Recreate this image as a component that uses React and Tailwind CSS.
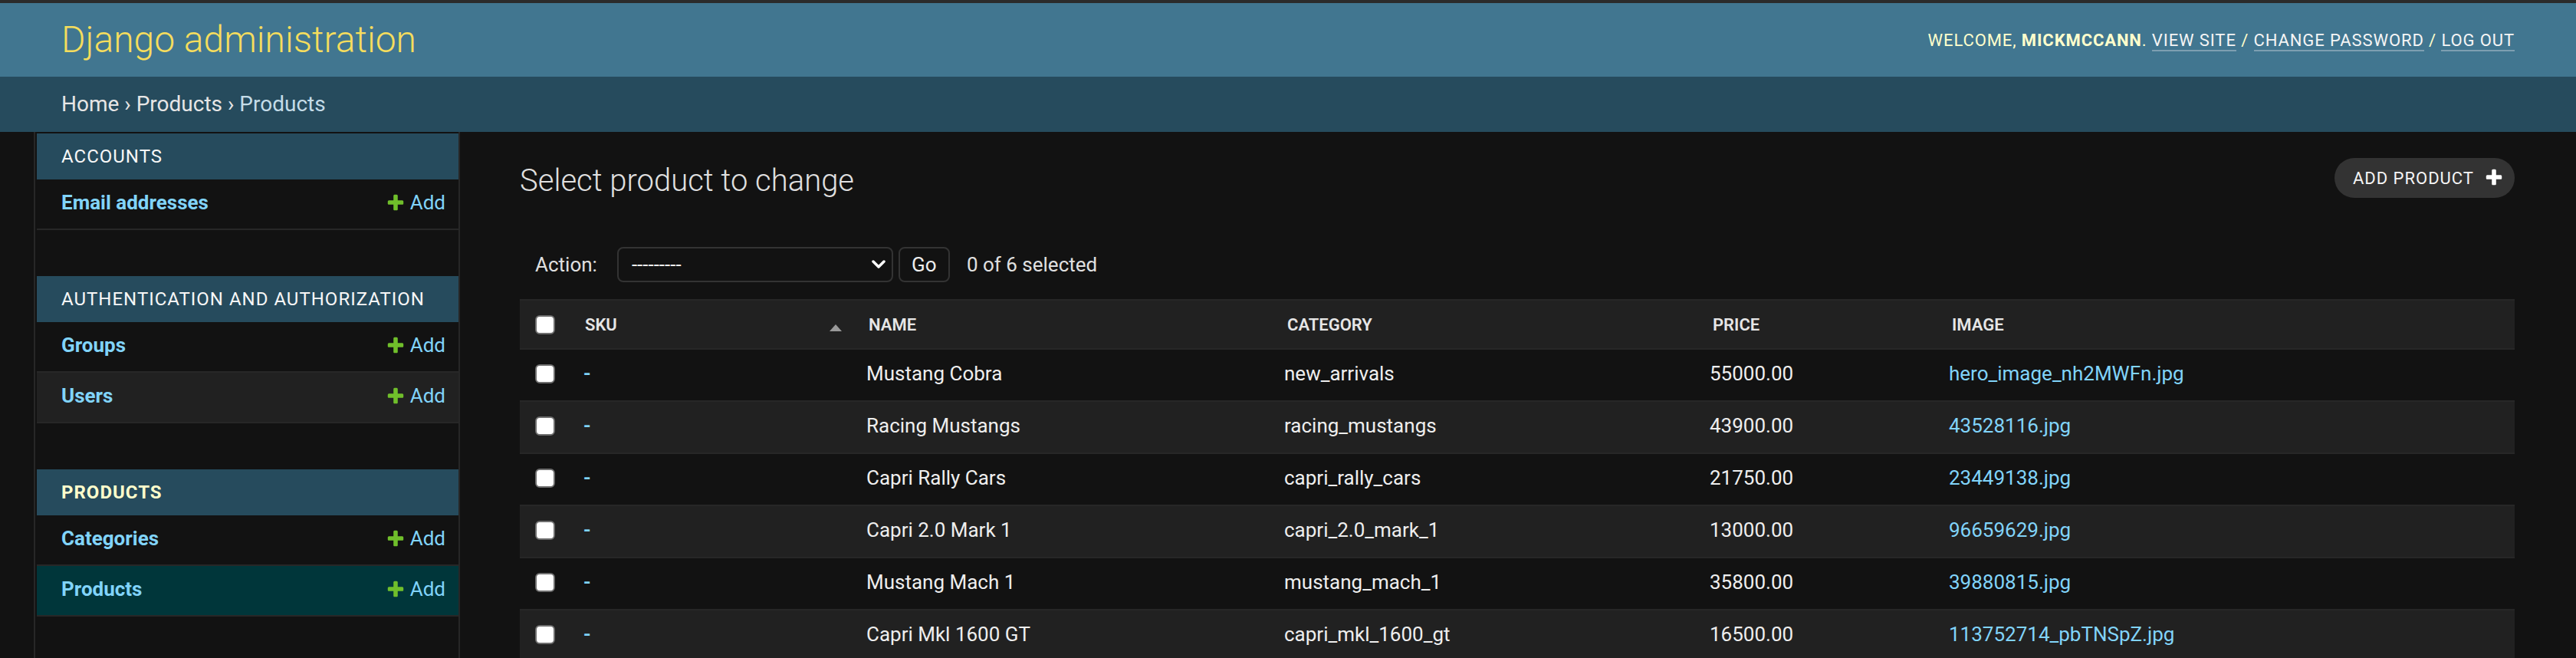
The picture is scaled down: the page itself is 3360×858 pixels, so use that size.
import React from 'react'

// Django admin changelist, dark theme, rendered at 2x
const font = "font-['Roboto','Liberation_Sans',sans-serif]"

const PlusIcon = ({ color = '#70bf2b', size = 26 }) => (
  <svg width={size} height={size} viewBox="0 0 1792 1792" className="shrink-0">
    <path
      fill={color}
      d="M1600 736v192q0 40-28 68t-68 28h-416v416q0 40-28 68t-68 28h-192q-40 0-68-28t-28-68v-416h-416q-40 0-68-28t-28-68v-192q0-40 28-68t68-28h416v-416q0-40 28-68t68-28h192q40 0 68 28t28 68v416h416q40 0 68 28t28 68z"
    />
  </svg>
)

const apps = [
  { name: 'Accounts', models: [{ name: 'Email addresses' }] },
  { name: 'Authentication and Authorization', models: [{ name: 'Groups' }, { name: 'Users' }] },
  { name: 'Products', current: true, models: [{ name: 'Categories' }, { name: 'Products', selected: true }] },
]

const products = [
  { name: 'Mustang Cobra', category: 'new_arrivals', price: '55000.00', image: 'hero_image_nh2MWFn.jpg' },
  { name: 'Racing Mustangs', category: 'racing_mustangs', price: '43900.00', image: '43528116.jpg' },
  { name: 'Capri Rally Cars', category: 'capri_rally_cars', price: '21750.00', image: '23449138.jpg' },
  { name: 'Capri 2.0 Mark 1', category: 'capri_2.0_mark_1', price: '13000.00', image: '96659629.jpg' },
  { name: 'Mustang Mach 1', category: 'mustang_mach_1', price: '35800.00', image: '39880815.jpg' },
  { name: 'Capri Mkl 1600 GT', category: 'capri_mkl_1600_gt', price: '16500.00', image: '113752714_pbTNSpZ.jpg' },
]

function Checkbox() {
  return (
    <input
      type="checkbox"
      className="appearance-none block w-[26px] h-[25px] bg-white border-2 border-[#6e6e6e] rounded-[6px]"
    />
  )
}

function Sidebar() {
  return (
    <nav className="w-[554px] shrink-0 pl-[2px] pt-[2px] border-r-2 border-[#272727]">
      {apps.map((app) => (
        <div key={app.name} className="mb-[60px]">
          <div
            className={`h-[60px] flex items-center pl-[32px] bg-[#264b5d] text-[24px] uppercase tracking-[1px] ${
              app.current ? 'font-bold text-[#ffffcc]' : 'text-[#f7f7f7]'
            }`}
          >
            {app.name}
          </div>
          {app.models.map((m, i) => (
            <div
              key={m.name}
              className={`h-[66px] flex items-center justify-between pl-[32px] pr-[17px] pb-[3px] border-b-2 border-[#272727] text-[26px] ${
                m.selected ? 'bg-[#00363a]' : i % 2 === 1 ? 'bg-[#212121]' : 'bg-[#121212]'
              }`}
            >
              <a className="font-bold text-[#81d4fa]">{m.name}</a>
              <a className="flex items-center gap-[6px] text-[#81d4fa]">
                <PlusIcon />
                Add
              </a>
            </div>
          ))}
        </div>
      ))}
    </nav>
  )
}

function ResultsTable() {
  const th = 'h-[64px] text-left align-middle text-[22px] font-semibold uppercase text-[#e6e6e6] bg-[#212121]'
  const td = 'h-[68px] pb-[4px] align-middle text-[26px] border-b-2 border-[#272727]'
  return (
    <table className="w-full table-fixed border-collapse">
      <colgroup>
        <col className="w-[66px]" />
        <col className="w-[370px]" />
        <col className="w-[545px]" />
        <col className="w-[555px]" />
        <col className="w-[312px]" />
        <col />
      </colgroup>
      <thead>
        <tr className="border-t-2 border-b-2 border-[#272727]">
          <th className={`${th} pl-[20px]`}>
            <Checkbox />
          </th>
          <th className={`${th} bg-[#1b1b1b] pl-[19px]`}>
            <div className="flex items-center justify-between pr-[16px]">
              <span>SKU</span>
              <svg width="16" height="9" viewBox="0 0 16 9" className="mt-[8px]">
                <polygon points="8,0 16,9 0,9" fill="#999999" />
              </svg>
            </div>
          </th>
          <th className={`${th} pl-[19px]`}>Name</th>
          <th className={`${th} pl-[20px]`}>Category</th>
          <th className={`${th} pl-[20px]`}>Price</th>
          <th className={`${th} pl-[20px]`}>Image</th>
        </tr>
      </thead>
      <tbody>
        {products.map((p, i) => (
          <tr key={p.name} className={i % 2 === 0 ? 'bg-[#121212]' : 'bg-[#212121]'}>
            <td className={`${td} pl-[20px]`}>
              <Checkbox />
            </td>
            <th className={`${td} pl-[17px] text-left font-semibold`}>
              <a className="text-[#81d4fa]">-</a>
            </th>
            <td className={`${td} pl-[16px] text-[#eeeeee]`}>{p.name}</td>
            <td className={`${td} pl-[16px] text-[#eeeeee]`}>{p.category}</td>
            <td className={`${td} pl-[16px] text-[#eeeeee]`}>{p.price}</td>
            <td className={`${td} pl-[16px]`}>
              <a className="text-[#81d4fa]">{p.image}</a>
            </td>
          </tr>
        ))}
      </tbody>
    </table>
  )
}

export default function App() {
  return (
    <div className={`h-screen overflow-hidden bg-[#121212] ${font}`}>
      <div className="h-[4px] bg-[#2b2b2b]" />

      {/* Header */}
      <header className="h-[96px] flex items-center justify-between px-[80px] bg-[#417690]">
        <h1 className="text-[48px] font-light leading-[56px] text-[#f5dd5d]">Django administration</h1>
        <div className="text-[22px] tracking-[0.9px] uppercase text-[#ffffcc]">
          Welcome, <strong className="font-bold">mickmccann</strong>.{' '}
          <a className="text-[#f5f5f5] border-b-2 border-[#7d9fb1]">View site</a> /{' '}
          <a className="text-[#f5f5f5] border-b-2 border-[#7d9fb1]">Change password</a> /{' '}
          <a className="text-[#f5f5f5] border-b-2 border-[#7d9fb1]">Log out</a>
        </div>
      </header>

      {/* Breadcrumbs */}
      <div className="h-[72px] flex items-center px-[80px] bg-[#264b5d] text-[28px] text-[#c4dce8]">
        <a className="text-[#e6e6e6]">Home</a>
        <span className="text-[#e6e6e6]">&nbsp;›&nbsp;</span>
        <a className="text-[#e6e6e6]">Products</a>
        <span className="text-[#e6e6e6]">&nbsp;›&nbsp;</span>
        <span>Products</span>
      </div>

      <div className="flex min-h-[686px]">
        <button className="w-[46px] shrink-0 border-r-2 border-[#272727] bg-[#121212]" />
        <Sidebar />

        <main className="flex-1 min-w-0 pl-[78px] pr-[80px] pt-[40px]">
          <div className="flex items-start justify-between mb-[40px]">
            <h1 className="text-[40px] font-light leading-[48px] text-[#e0e0e0]">Select product to change</h1>
            <a className="-mt-[6px] h-[52px] flex items-center gap-[13px] pl-[24px] pr-[14px] rounded-full bg-[#333333] text-[22px] uppercase tracking-[1px] text-[#f5f5f5]">
              Add product
              <PlusIcon color="#ffffff" />
            </a>
          </div>

          {/* Actions */}
          <div className="h-[90px] flex items-center pl-[20px] text-[26px] text-[#e0e0e0]">
            <span>Action:</span>
            <div className="ml-[26px] w-[360px] h-[46px] flex items-center justify-between pl-[17px] pr-[8px] border-2 border-[#333333] rounded-[8px] bg-[#121212] text-[#eeeeee]">
              <span>---------</span>
              <svg width="18" height="12" viewBox="0 0 18 12">
                <path d="M2 2 L9 9 L16 2" stroke="#ffffff" strokeWidth="3.5" fill="none" strokeLinecap="round" strokeLinejoin="round" />
              </svg>
            </div>
            <button className="ml-[7px] w-[67px] h-[46px] border-2 border-[#333333] rounded-[8px] bg-[#121212] text-[26px] text-[#eeeeee]">
              Go
            </button>
            <span className="ml-[22px]">0 of 6 selected</span>
          </div>

          <ResultsTable />
        </main>
      </div>
    </div>
  )
}
